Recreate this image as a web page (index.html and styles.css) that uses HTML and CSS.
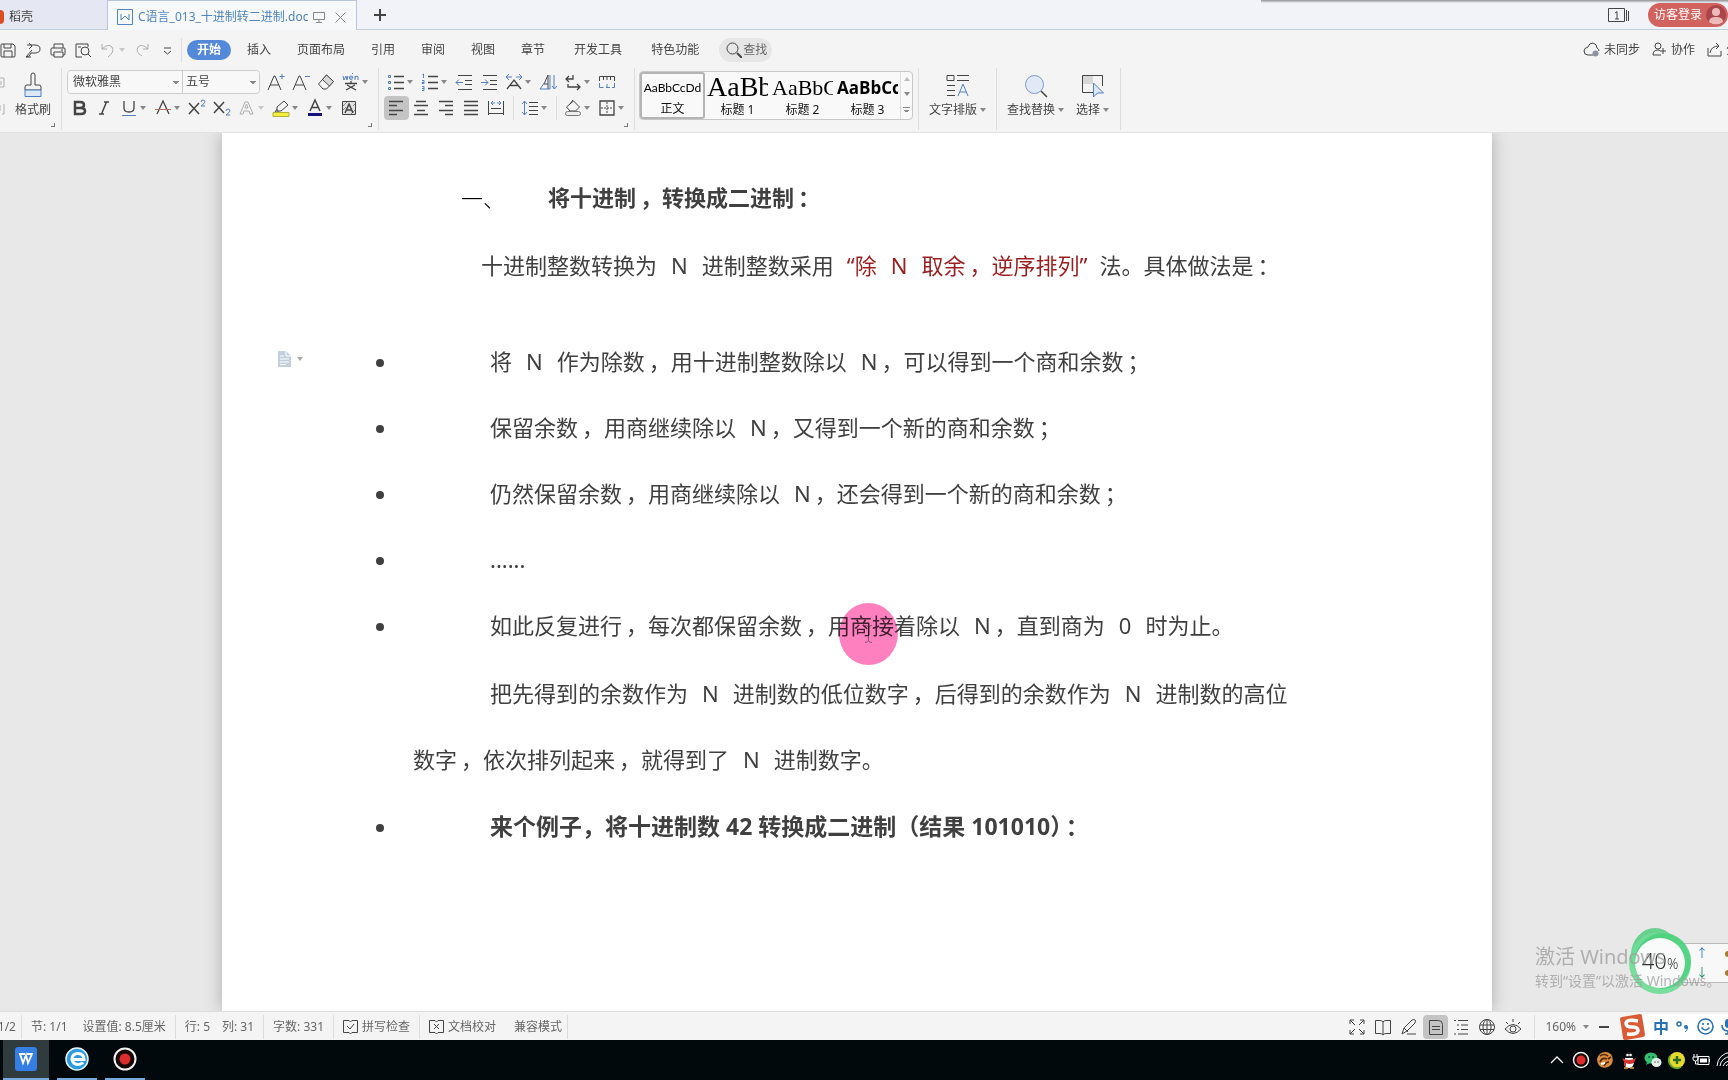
FILE: index.html
```html
<!DOCTYPE html>
<html lang="zh-CN">
<head>
<meta charset="utf-8">
<title>C语言_013_十进制转二进制.doc</title>
<link rel="stylesheet" href="styles.css">
</head>
<body>
<header>
  <nav class="tabs">
    <button class="tab home"><i class="flame"></i>稻壳</button>
    <button class="tab active">
      <svg width="16" height="16" viewBox="0 0 16 16" class="blue"><path d="M.5.5h15v15H.5zM4 5v6l4-4 4 4V5"/></svg>
      <span>C语言_013_十进制转二进制.doc</span>
      <svg width="12" height="12" viewBox="0 0 12 12" class="grey"><path d="M.5 1.500h11v7H.5zM6 8v3M3 11.500h6"/></svg>
      <svg width="11" height="11" viewBox="0 0 11 11" class="grey shut"><path d="M.5.5l10 10M10.500.5l-10 10"/></svg>
    </button>
    <button class="plus" aria-label="新建"><svg width="12" height="12" viewBox="0 0 12 12"><path d="M6 0v12M0 6h12" stroke-width="2"/></svg></button>
    <div class="account">
      <svg width="22" height="16" viewBox="0 0 22 16"><path d="M.5 1.500h16v13H.5zM18.500 3v11M20.500 4v10"/><path d="M7 6l2-1.500V12M7 12h4"/></svg>
      <button class="login">访客登录<svg width="20" height="20" viewBox="0 0 20 20"><circle cx="10" cy="10" r="10" fill="#a9464c" stroke="none"/><circle cx="10" cy="7" r="4" fill="#eebbb9" stroke="none"/><path d="M3 17q0-5 7-5t7 5q-7 5-14 0" fill="#eebbb9" stroke="none"/></svg></button>
    </div>
  </nav>

  <nav class="menu">
    <div class="quick">
      <button class="ic" aria-label="保存"><svg viewBox="0 0 20 20"><path d="M4 4h11l2 2v10q0 1-1 1H4q-1 0-1-1V5q0-1 1-1zM6 4v4h7V4M6 17v-6h8v6"/></svg></button>
      <button class="ic" aria-label="输出"><svg viewBox="0 0 20 20"><path d="M4 5h8q5 0 5 4t-5 4H8M6 3l3 3-3 3M9 10l-6 7M8 13q-1 4-5 4h5"/></svg></button>
      <button class="ic" aria-label="打印"><svg viewBox="0 0 20 20"><path d="M6 8V4h9v4M6 15H4q-1 0-1-1V9q0-1 1-1h12q1 0 1 1v5q0 1-1 1h-1M6 12h9v5H6zM13 10h2"/></svg></button>
      <button class="ic" aria-label="预览"><svg viewBox="0 0 20 20"><path d="M9 17H3V4h12v3M5 7h3"/><circle cx="12" cy="11" r="4"/><path d="M15 14l3 3"/></svg></button>
      <button class="ic c pale" aria-label="撤销"><svg viewBox="0 0 20 20"><path d="M4 4v5h5M4 9q6-6 10-2 3 5-4 10"/></svg></button>
      <button class="ic pale" aria-label="恢复"><svg viewBox="0 0 20 20"><path d="M16 4v5h-5M16 9q-6-6-10-2-3 5 4 9"/></svg></button>
      <button class="ic" aria-label="更多"><svg viewBox="0 0 20 20"><path d="M7 8h7M7 11l3.500 3 3.500-3"/></svg></button>
    </div>
    <button class="m on">开始</button><button class="m">插入</button><button class="m">页面布局</button><button class="m">引用</button><button class="m">审阅</button><button class="m">视图</button><button class="m">章节</button><button class="m wide">开发工具</button><button class="m">特色功能</button>
    <button class="find"><svg width="16" height="16" viewBox="0 0 16 16"><circle cx="6.500" cy="6.500" r="5.500"/><path d="M11 11l5 5" stroke-width="2"/></svg>查找</button>
    <div class="share">
      <button><svg width="17" height="15" viewBox="0 0 17 15"><path d="M10 13H5q-4 0-4-4 0-3 4-4 1-4 5-4 4 1 4 5 2 1 2 3"/><circle cx="12.500" cy="11.500" r="3" fill="#8b93a5" stroke="none"/></svg>未同步</button>
      <button><svg width="15" height="15" viewBox="0 0 15 15"><circle cx="6" cy="4" r="3"/><path d="M9 13H1q0-5 5-5l2 .5M11 6v6M8 9h6"/></svg>协作</button>
      <button><svg width="15" height="15" viewBox="0 0 15 15"><path d="M1 6v8h13V9M3 11q1-7 9-7M9 1l3 3-3 3"/></svg>分</button>
    </div>
  </nav>

  <div class="ribbon">
    <section class="group clip">
      <div class="cut"><svg width="5" height="12" viewBox="0 0 5 12"><path d="M0 1h4v9H0M1 4v4"/></svg><svg width="5" height="12" viewBox="0 0 5 12"><path d="M4 1v10H2M0 2v6"/></svg></div>
      <button class="big brush"><svg width="20" height="26" viewBox="0 0 20 26"><path d="M8 13V3q0-2 2-2t2 2v10h4q2 0 2 2v3H2v-3q0-2 2-2z"/><path d="M2 18h16v6.500H2z" fill="#dbe8f8" stroke="#4d80bf"/></svg>格式刷</button>
      <i class="corner"></i>
    </section>

    <section class="group font">
      <div class="row">
        <div class="combo"><select aria-label="字体" class="face"><option>微软雅黑</option></select><select aria-label="字号" class="size"><option>五号</option></select></div>
        <button class="ic" aria-label="增大字号"><svg viewBox="0 0 20 20"><path d="M2 18L8 4h1l6 14M4 13h9"/><path class="b" d="M16 2v5M13.500 4.500h5"/></svg></button>
        <button class="ic" aria-label="减小字号"><svg viewBox="0 0 20 20"><path d="M2 18L8 4h1l6 14M4 13h9"/><path class="b" d="M14 4.500h5"/></svg></button>
        <button class="ic" aria-label="清除格式"><svg viewBox="0 0 20 20"><path d="M2.500 12l8-9 7 6.500-7 7.500H7z"/><path d="M6.500 7.500l7 6.500 4-4.500-7-6.500z" fill="#d9d9d9"/></svg></button>
        <button class="ic c" aria-label="拼音"><svg viewBox="0 0 20 20"><path class="b" d="M2 4l1 4 2-4 1 4 1-4M9 6h3q0-2-2-2t-1.500 2q0 2 3 2M11 2l1-1M14 8V4M14 5q3-2 3 0v3"/><path d="M4 11.500h12M10 9v2M6 13l9 5M14 13l-9 5" stroke-width="1.300"/></svg></button>
      </div>
      <div class="row">
        <button class="ic" aria-label="加粗"><svg viewBox="0 0 20 20"><path d="M6 4h5q4 0 4 3t-4 3H6zM6 10h6q4 0 4 3t-4 3H6z" stroke-width="2.500"/></svg></button>
        <button class="ic" aria-label="倾斜"><svg viewBox="0 0 20 20"><path d="M10 4h5M5 16h5M12.500 4l-5 12" stroke-width="1.500"/></svg></button>
        <button class="ic c" aria-label="下划线"><svg viewBox="0 0 20 20"><path d="M5 3v7q0 4 5 4t5-4V3" stroke-width="1.300"/><path class="b" d="M3 17.500h14"/></svg></button>
        <button class="ic c" aria-label="删除线"><svg viewBox="0 0 20 20"><path d="M4 16l6-13 6 13" stroke-width="1.300"/><path d="M2 11.500h16" stroke="#b0705f"/></svg></button>
        <button class="ic" aria-label="上标"><svg viewBox="0 0 20 20"><path d="M2 5l10 11M12 5L2 16" stroke-width="1.500"/><path class="b" d="M14 4q0-2 2-2t2 2q0 1-4 4h4"/></svg></button>
        <button class="ic" aria-label="下标"><svg viewBox="0 0 20 20"><path d="M2 4l10 11M12 4L2 15" stroke-width="1.500"/><path class="b" d="M14 13q0-2 2-2t2 2q0 1-4 4h4"/></svg></button>
        <button class="ic c pale" aria-label="文字效果"><svg viewBox="0 0 20 20"><path d="M3 16L8 4h3l5 12h-3l-1-3H7l-1 3zM8 10h3L9.500 6z"/></svg></button>
        <button class="ic c" aria-label="突出显示"><svg viewBox="0 0 20 20"><path d="M6 9l7-6 4 4-7 6H6zM6 11l-2 3h4"/><path d="M2 14.500h16v4H2z" fill="#f5ee3c" stroke="#b5af40"/></svg></button>
        <button class="ic c" aria-label="字体颜色"><svg viewBox="0 0 20 20"><path d="M5 13l5-11 5 11M6.500 9.500h7" stroke-width="1.500"/><path d="M3 15h14v3H3z" fill="#15137c" stroke="none"/></svg></button>
        <button class="ic" aria-label="字符底纹"><svg viewBox="0 0 20 20"><path d="M3.500 3.500h13v13h-13z" fill="#e1e1e1"/><path d="M4 8l4-4M12 16l4-4M4 12l3-3M14 8l2-2" stroke="#888"/><path d="M6 15l4-9 4 9M7 12h6" stroke-width="1.500"/></svg></button>
      </div>
      <i class="corner"></i>
    </section>

    <section class="group para">
      <div class="row">
        <button class="ic c" aria-label="项目符号"><svg viewBox="0 0 20 20"><path d="M8 4.500h10M8 10.500h10M8 16.500h10" stroke-width="1.300"/><path class="b" d="M2.500 3.500h2v2h-2zM2.500 9.500h2v2h-2zM2.500 15.500h2v2h-2z"/></svg></button>
        <button class="ic c" aria-label="编号"><svg viewBox="0 0 20 20"><path d="M8 4.500h10M8 10.500h10M8 16.500h10" stroke-width="1.300"/><path class="b" d="M2.500 2.500l1-.5v4M2 8.500h2v2H2v1h2.500M2 14.500h2v4H2M2 16.500h2"/></svg></button>
        <button class="ic" aria-label="减少缩进"><svg viewBox="0 0 20 20"><path d="M4 3.500h14M11 8.500h7M11 12.500h7M4 17.500h14"/><path class="b" d="M2 10.500h7M5 7.500l-3 3 3 3"/></svg></button>
        <button class="ic" aria-label="增加缩进"><svg viewBox="0 0 20 20"><path d="M4 3.500h14M11 8.500h7M11 12.500h7M4 17.500h14"/><path class="b" d="M2 10.500h7M6 7.500l3 3-3 3"/></svg></button>
        <button class="ic c" aria-label="中文版式"><svg viewBox="0 0 20 20"><path d="M3 17l7-9 7 9M6 13.500h8" stroke-width="1.300"/><path class="b" d="M2 5h6M12 5h6M5 2L2 5l3 3M15 2l3 3-3 3"/></svg></button>
        <button class="ic" aria-label="排序"><svg viewBox="0 0 20 20"><path d="M10 3v14M10 3L6 12h4"/><path class="b" d="M2 17l5-7M2 17h10V3M16 3v14M14 14l2.500 3 2.500-3"/></svg></button>
        <button class="ic c" aria-label="换行"><svg viewBox="0 0 20 20"><path d="M10 3v4H3M6 4L3 7l3 3M5 12v3h12M14 12l3 3-3 3" stroke-width="1.300"/></svg></button>
        <button class="ic" aria-label="制表位"><svg viewBox="0 0 20 20"><path d="M2.500 9V4.500h15V9M6.500 5v3M10 5v3M13.500 5v3"/><path class="b" d="M2.500 11v4.500h4M9 15.500h4M17.500 11v4.500H15M10 12v3"/></svg></button>
      </div>
      <div class="row">
        <button class="ic sel" aria-label="左对齐"><svg viewBox="0 0 20 20"><path d="M3 3.500h14M3 7.500h8M3 12.500h14M3 16.500h8" stroke-width="1.300"/></svg></button>
        <button class="ic" aria-label="居中"><svg viewBox="0 0 20 20"><path d="M5 3.500h10M3 7.500h14M6 12.500h8M3 16.500h14" stroke-width="1.300"/></svg></button>
        <button class="ic" aria-label="右对齐"><svg viewBox="0 0 20 20"><path d="M3 3.500h14M9 7.500h8M3 12.500h14M9 16.500h8" stroke-width="1.300"/></svg></button>
        <button class="ic" aria-label="两端对齐"><svg viewBox="0 0 20 20"><path d="M3 3.500h14M3 7.500h14M3 12.500h14M3 16.500h14" stroke-width="1.300"/></svg></button>
        <button class="ic" aria-label="分散对齐"><svg viewBox="0 0 20 20"><path d="M2.500 3v14M17.500 3v14M5 10.500h10M3 15.500h14"/><path class="b" d="M5 5h4M11 5h4M7 3L5 5l2 2M13 3l2 2-2 2"/></svg></button>
        <i class="bar"></i>
        <button class="ic c" aria-label="行距"><svg viewBox="0 0 20 20"><path d="M9 4.500h9M9 8.500h9M9 12.500h9M9 16.500h9"/><path class="b" d="M4.500 3v14M2 6l2.500-3L7 6M2 14l2.500 3L7 14"/></svg></button>
        <i class="bar"></i>
        <button class="ic c" aria-label="底纹颜色"><svg viewBox="0 0 20 20"><path d="M3.500 9l7-6 6 6-4 4H7zM7 6l3-4"/><rect x="2.500" y="13.500" width="15" height="4" rx="2" fill="#eee" stroke="#777"/></svg></button>
        <button class="ic c" aria-label="边框"><svg viewBox="0 0 20 20"><path d="M3 3h14v14H3z" stroke-width="1.300"/><path d="M10 4v12M4 10h12" stroke-dasharray="2 1"/></svg></button>
      </div>
      <i class="corner"></i>
    </section>

    <section class="group styles">
      <div class="gallery">
        <button class="st cur"><b class="s0">AaBbCcDd</b>正文</button>
        <button class="st"><b class="s1">AaBb</b>标题 1</button>
        <button class="st"><b class="s2">AaBbC</b>标题 2</button>
        <button class="st"><b class="s3">AaBbCc</b>标题 3</button>
        <div class="scroll"><i class="up"></i><i></i><i class="more"></i></div>
      </div>
    </section>

    <section class="group">
      <button class="big"><svg width="24" height="24" viewBox="0 0 24 24"><path d="M1 1.500h7v5H1zM11 1.500h12M11 6.500h12M1 11.500h8M1 16.500h8M1 21.500h8"/><path class="b" d="M12 22l5-12 5 12M14 18h6"/></svg><span class="dd">文字排版</span></button>
    </section>
    <section class="group pair">
      <button class="big"><svg width="24" height="24" viewBox="0 0 24 24"><path d="M17 17l6 6" stroke-width="1.500"/><circle cx="10.500" cy="10.500" r="9" fill="#e1e8f6" stroke="#7d9bcd"/></svg><span class="dd">查找替换</span></button>
      <button class="big"><svg width="24" height="24" viewBox="0 0 24 24"><path d="M1 2h11v8H1z" fill="#d8d8d8" stroke="none"/><path d="M12 18.500H1.500v-17h20V12"/><path class="b" d="M12.500 9v14l4-4h6z" fill="#dbe8f8"/></svg><span class="dd">选择</span></button>
    </section>
  </div>
</header>

<main>
  <article>
    <h1><span class="no">一、</span><span>将十进制<span class="k">，</span>转换成二进制<span class="k">：</span></span></h1>
    <p class="lead">十进制整数转换为<span class="n">N</span>进制整数采用<span class="red"><span class="q">“</span>除<span class="n">N</span>取余<span class="k">，</span>逆序排列<span class="q end">”</span></span>法。具体做法是<span class="k">：</span></p>
    <ul>
      <li><span>将<span class="n">N</span>作为除数<span class="k">，</span>用十进制整数除以<span class="n l">N</span><span class="k">，</span>可以得到一个商和余数<span class="k">；</span></span></li>
      <li><span>保留余数<span class="k">，</span>用商继续除以<span class="n l">N</span><span class="k">，</span>又得到一个新的商和余数<span class="k">；</span></span></li>
      <li><span>仍然保留余数<span class="k">，</span>用商继续除以<span class="n l">N</span><span class="k">，</span>还会得到一个新的商和余数<span class="k">；</span></span></li>
      <li><span>......</span></li>
      <li><span>如此反复进行<span class="k">，</span>每次都保留余数<span class="k">，</span>用商接着除以<span class="n l">N</span><span class="k">，</span>直到商为<span class="n">0</span>时为止。</span></li>
    </ul>
    <p class="body">把先得到的余数作为<span class="n">N</span>进制数的低位数字<span class="k">，</span>后得到的余数作为<span class="n">N</span>进制数的高位<br>数字<span class="k">，</span>依次排列起来<span class="k">，</span>就得到了<span class="n">N</span>进制数字。</p>
    <ul class="example">
      <li><strong>来个例子，将十进制数 42 转换成二进制（结果 101010）<span class="k">：</span></strong></li>
    </ul>
    <button class="paste" aria-label="段落选项"><svg width="13" height="16" viewBox="0 0 13 16"><path d="M0 0h8l5 5v11H0z" fill="#c3cfdd" stroke="none"/><path d="M8 0v5h5M2 5h4M2 8h9M2 11h9M2 13.500h6" stroke="#fff"/></svg></button>
    <div class="pointer"><svg width="9" height="18" viewBox="0 0 9 18"><path d="M1 .5q3 0 3.500 2Q5 .5 8 .5M4.500 2v14M1 17.500q3 0 3.500-2 .5 2 3.500 2" stroke="#8b4f70"/></svg></div>
  </article>
  <div class="net"><span class="ua">↑</span><i class="o"></i><span class="da">↓</span><i class="o"></i></div>
  <div class="ball"><svg width="66" height="70" viewBox="0 0 66 70"><g stroke="none"><ellipse cx="28" cy="28" rx="24" ry="27" fill="#52cb80" opacity=".85"/><ellipse cx="33" cy="36" rx="31" ry="31" fill="#6ddc96" opacity=".9"/><ellipse cx="36" cy="34" rx="28" ry="28" fill="#45cf77" opacity=".7"/><circle cx="33" cy="36" r="25" fill="#f8fbf9"/></g></svg><span>40<small>%</small></span></div>
  <div class="mark"><strong>激活 Windows</strong><span>转到“设置”以激活 Windows。</span></div>
</main>

<footer>
  <div class="status">
    <span class="f pg">1/2</span><span class="f">节: 1/1<span class="nx">设置值: 8.5厘米</span></span><span class="f">行: 5<span class="ln">列: 31</span></span><span class="f">字数: 331</span>
    <button class="f"><svg width="15" height="16" viewBox="0 0 15 16"><path d="M6 1.500H.5v12H6l1.500 1.500L9 13.500h5.500v-12H9L7.500 3zM4 7l3 3 4-5"/></svg>拼写检查</button>
    <button class="f open"><svg width="15" height="16" viewBox="0 0 15 16"><path d="M6 1.500H.5v12H6l1.500 1.500L9 13.500h5.500v-12H9L7.500 3zM5 5l5 5M10 5l-5 5"/></svg>文档校对</button><span class="f compat">兼容模式</span>
    <div class="views">
      <button class="ic" aria-label="全屏"><svg viewBox="0 0 20 20"><path d="M3 7V3h4M3 3l5 5M13 3h4v4M17 3l-5 5M3 13v4h4M3 17l5-5M17 13v4h-4M17 17l-5-5"/></svg></button>
      <button class="ic" aria-label="阅读"><svg viewBox="0 0 20 20"><path d="M10 5Q9 3.500 7 3.500H2.500v13H7q2 0 3 1.500 1-1.500 3-1.500h4.500v-13H13q-2 0-3 1.500zv13"/></svg></button>
      <button class="ic" aria-label="写作"><svg viewBox="0 0 20 20"><path d="M3 17l2-6 8-8q2-1 3 0t0 3l-8 8zM5 11l4 4M8 17h9"/></svg></button>
      <button class="ic sel" aria-label="页面"><svg viewBox="0 0 20 20"><path d="M4.500 3.500h9q4 0 4 4v10h-13zM7 9.500h8M7 12.500h8"/></svg></button>
      <button class="ic" aria-label="大纲"><svg viewBox="0 0 20 20"><path d="M3 3.500h2M7 3.500h10M6 8h2M10 8h7M6 12.500h2M10 12.500h7M3 17h2M7 17h10"/></svg></button>
      <button class="ic" aria-label="网页"><svg viewBox="0 0 20 20"><circle cx="10" cy="10" r="7.500"/><ellipse cx="10" cy="10" rx="4" ry="7.500"/><path d="M10 2v16M3 8h14M3 12.500h14"/></svg></button>
      <button class="ic" aria-label="护眼"><svg viewBox="0 0 20 20"><path d="M2 12q8-9 16 0-8 9-16 0zM3 5l2 2M10 2v3M17 5l-2 2"/><circle cx="10" cy="12" r="3"/></svg></button>
    </div>
    <button class="zoom">160%</button>
    <button class="minus" aria-label="缩小"><svg width="10" height="2" viewBox="0 0 10 2"><path d="M0 1h10" stroke-width="2"/></svg></button>
    <div class="ime">
      <svg width="28" height="28" viewBox="0 0 28 28"><path d="M2 6q0-2 2-2l18-3q2 0 2 2l3 18q0 3-2 3L8 27q-3 0-3-2z" fill="#d95b36" stroke="none"/><path d="M20 8q-11-2-12 2-.5 4 6 4t6 4q-1 4-11 3" stroke="#fff" stroke-width="3.500"/></svg>
      <b>中</b>
      <svg width="14" height="14" viewBox="0 0 14 14"><circle cx="3" cy="4" r="2" stroke="#2872b5" stroke-width="1.500"/><circle cx="10" cy="7" r="2" fill="#2872b5" stroke="none"/><path d="M11.500 7q0 4-2.500 5" stroke="#2872b5"/></svg>
      <svg width="17" height="17" viewBox="0 0 17 17"><g stroke="#2872b5" stroke-width="1.600"><circle cx="8.500" cy="8.500" r="7.500"/><path d="M4.500 9.500q4 5 8 0M6 5v2M11 5v2"/></g></svg>
      <svg width="14" height="17" viewBox="0 0 14 17"><rect x="4" y="1" width="6" height="9" rx="3" fill="#2872b5" stroke="none"/><path d="M1 7q0 6 6 6t6-6M7 13v3M4 16h6" stroke="#2872b5" stroke-width="1.600"/></svg>
    </div>
  </div>
  <div class="taskbar">
    <button class="app now" aria-label="WPS"><svg width="22" height="24" viewBox="0 0 22 24"><rect width="22" height="24" rx="3" fill="#357ee3" stroke="none"/><path d="M4 7h6M5 7l3 9 3-8 2 8 4-9h-5" stroke="#fff" stroke-width="1.800"/></svg></button>
    <button class="app" aria-label="浏览器"><svg width="24" height="24" viewBox="0 0 24 24"><circle cx="12" cy="12" r="11" fill="#2a9be0" stroke="#e5f5fc" stroke-width="1.500"/><path d="M8 12.500h11q0-6-6-6t-6 6q1 5 6 5 3 0 5-2" stroke="#fff" stroke-width="3"/></svg></button>
    <button class="app" aria-label="录屏"><svg width="24" height="24" viewBox="0 0 24 24"><circle cx="12" cy="12" r="10.500" fill="#160606" stroke="#f2f2f2" stroke-width="2"/><circle cx="12" cy="12" r="5.500" fill="#dc2c2c" stroke="none"/></svg></button>
    <div class="tray">
      <svg viewBox="0 0 20 20"><path d="M4 13l6-6 6 6" stroke="#fff" stroke-width="1.300"/></svg>
      <svg viewBox="0 0 20 20"><circle cx="10" cy="10" r="7.500" fill="#160606" stroke="#eee" stroke-width="1.500"/><circle cx="10" cy="10" r="4.500" fill="#dc2c2c" stroke="none"/></svg>
      <svg viewBox="0 0 20 20"><path d="M10 2q5 0 7 4 2 5-1 9-4 4-10 2-4-3-4-8 2-7 8-7z" fill="#d98a3b" stroke="none"/><path d="M5 6q4-3 8 0M12 9q-5-2-7 3M14 12q-3 0-5 4M16 7l-3 2" stroke="#522611" stroke-width="1.600"/><path d="M6 14l4-1" stroke="#fff" stroke-width="2"/></svg>
      <svg viewBox="0 0 20 20"><ellipse cx="10" cy="12" rx="5" ry="6" fill="#fff" stroke="none"/><path d="M6 8q0-6 4-6t4 6z" fill="#181818" stroke="none"/><circle cx="8.500" cy="5" r="1.300" fill="#fff" stroke="none"/><circle cx="11.500" cy="5" r="1.300" fill="#fff" stroke="none"/><path d="M3 8q7 4 14 0l-2 5q-5 2-8 0v3H5v-4z" fill="#d23333" stroke="none"/><path d="M5 18h4M11 18h4" stroke="#f3a63d" stroke-width="1.500"/></svg>
      <svg viewBox="0 0 20 20"><g stroke="none"><ellipse cx="8" cy="8" rx="6.500" ry="5.500" fill="#35bd70"/><path d="M4 12l-1 3 4-2z" fill="#35bd70"/><ellipse cx="13.500" cy="12.500" rx="5" ry="4.500" fill="#e6f1e9"/><circle cx="6" cy="7" r="1" fill="#145b35"/><circle cx="10" cy="7" r="1" fill="#145b35"/><circle cx="12" cy="12" r=".8" fill="#555"/><circle cx="15" cy="12" r=".8" fill="#555"/></g></svg>
      <svg viewBox="0 0 20 20"><circle cx="10" cy="10" r="8" fill="#e6d92e" stroke="none"/><path d="M3 6a8 8 0 0 0 11 11" stroke="#63a533" stroke-width="2"/><path d="M10 6v8M6 10h8" stroke="#2a6b22" stroke-width="2.400"/></svg>
      <svg viewBox="0 0 20 20"><path d="M7 6.500h11v8H7zM18.500 9v3M3 4v3M6 4v3M2 7h5v2q0 2-2.500 2T2 9zM4.500 11v3H7" stroke="#fff"/><path d="M9 8.500h7v4H9z" fill="#fff" stroke="none"/></svg>
      <svg viewBox="0 0 20 20"><path d="M2 16Q3 4 16 2M5 16q1-8 11-10M8 16q1-4 8-6M11 16q1-2 5-2" stroke="#fff"/></svg>
    </div>
  </div>
</footer>
</body>
</html>
```
FILE: styles.css
```css
* { box-sizing: border-box; }
body {
  margin: 0;
  height: 100vh;
  display: flex;
  flex-direction: column;
  overflow: hidden;
  background: #e8e8e8;
  color: #444;
  font: 12px/18px "Noto Sans", "Noto Sans CJK SC", sans-serif;
}
button, select {
  font: inherit;
  color: inherit;
  border: 0;
  padding: 0;
  background: none;
  white-space: nowrap;
}
svg { fill: none; stroke: #444; flex: none; display: block; }
svg .b { stroke: #5480c2; }
.blue { stroke: #4f86bd; }
.grey { stroke: #888; }
.pale { opacity: .4; }
i { flex: none; }

/* window tabs */
.tabs {
  position: relative;
  display: flex;
  height: 30px;
  background: #f1f3f8;
  box-shadow: inset 0 -1px #c3cedb;
}
.tabs::after {
  content: "";
  position: absolute;
  top: 0;
  right: 0;
  width: 27%;
  height: 3px;
  background: linear-gradient(#8f9094, #f1f3f800);
}
.tab { display: flex; align-items: center; padding-top: 3px; }
.home { width: 107px; background: #e5e7f2; box-shadow: inset 0 -1px #c3cedb; gap: 5px; }
.flame { width: 4px; height: 14px; background: #dd4e22; border-radius: 0 7px 7px 0; }
.active {
  width: 250px;
  padding-left: 9px;
  gap: 5px;
  background: #f7f8fa;
  border: 1px solid #b9c6dc;
  border-bottom: 0;
  color: #4f86bd;
}
.shut { margin-left: 5px; }
.plus { width: 46px; display: grid; place-items: center; }
.account { margin-left: auto; display: flex; align-items: center; gap: 18px; }
.login {
  display: flex;
  align-items: center;
  gap: 4px;
  height: 24px;
  padding: 0 2px 0 6px;
  border-radius: 12px;
  background: #d1625d;
  color: #fff;
}

/* menu */
.menu, .ribbon, .status { background: #f4f4f4; }
.menu { display: flex; height: 38px; padding-top: 1px; align-items: center; overflow: hidden; }
.quick { display: flex; margin: 0 5px 0 -4px; padding-right: 1px; border-right: 1px solid #ddd; }
.ic {
  position: relative;
  flex: none;
  width: 25px;
  height: 24px;
  display: flex;
  align-items: center;
  padding-left: 2px;
  border-radius: 4px;
}
.ic svg { width: 20px; height: 20px; }
.c { width: 34px; }
.c::after, .dd::after, .zoom::after {
  content: "";
  border: 3px solid transparent;
  border-top: 4px solid #888;
  border-bottom: 0;
  margin-left: 1px;
}
.sel { background: #c4c4c4; }
.m { padding: 0 13px; height: 20px; line-height: 20px; }
.wide { padding: 0 16px; }
.on { padding: 0 10px; margin-right: 3px; border-radius: 10px; background: #5489da; color: #fff; font-weight: 700; }
.find {
  display: flex;
  align-items: center;
  gap: 1px;
  height: 24px;
  margin-left: 7px;
  padding: 0 5px 0 7px;
  border-radius: 12px;
  background: #e6e6e7;
  color: #666;
}
.share { display: flex; gap: 12px; margin: 0 -10px 0 auto; }
.share button { display: flex; align-items: center; gap: 4px; }

/* ribbon */
.ribbon { display: flex; height: 65px; padding-bottom: 2px; border-bottom: 1px solid #e2e2e2; }
.group { position: relative; display: flex; border-right: 1px solid #ddd; }
.clip { width: 62px; padding-left: 0; gap: 10px; }
.cut { width: 5px; display: flex; flex-direction: column; gap: 14px; padding-top: 9px; opacity: .4; }
.corner {
  position: absolute;
  right: 6px;
  bottom: 3px;
  width: 4px;
  height: 4px;
  border: solid #777;
  border-width: 0 1px 1px 0;
}
.big { display: flex; flex-direction: column; align-items: center; gap: 4px; padding: 6px 10px 0; line-height: 16px; }
.brush { padding: 4px 0 0; }
.dd { display: flex; align-items: center; gap: 3px; }
.dd::after { margin-left: 0; }
.pair .big + .big { padding-left: 2px; padding-right: 11px; }
.font { width: 317px; flex-direction: column; padding: 2px 5px; gap: 2px; }
.para { width: 256px; flex-direction: column; padding: 2px 5px; gap: 2px; }
.row { display: flex; align-items: center; height: 24px; }
.combo { display: flex; width: 194px; height: 24px; margin-right: 4px; border: 1px solid #ccc; border-radius: 4px; background: #fff; }
.combo select {
  appearance: none;
  padding-left: 5px;
  background-color: #f8f8f8;
  background-image: linear-gradient(45deg, transparent 50%, #888 50%), linear-gradient(-45deg, transparent 50%, #888 50%);
  background-image: linear-gradient(to bottom left, #888 50%, transparent 50%), linear-gradient(to bottom right, #888 50%, transparent 50%);
  background-size: 3px 4px;
  background-position: calc(100% - 6px) 10px, calc(100% - 3px) 10px;
  background-repeat: no-repeat;
  border-radius: 4px;
}
.combo .face { width: 115px; border-right: 1px solid #ccc; border-radius: 4px 0 0 4px; }
.combo .size { flex: 1; padding-left: 3px; }
.bar { width: 1px; height: 24px; margin: 0 4px; background: #ddd; }
.styles { width: 284px; padding: 3px 5px 3px 4px; }
.gallery { display: flex; width: 274px; height: 49px; border: 1px solid #c8c8c8; border-radius: 4px; background: #f9f9f9; }
.st {
  width: 65px;
  flex: none;
  overflow: hidden;
  display: flex;
  flex-direction: column;
  align-items: center;
  line-height: 16px;
  color: #111;
}
.st b { height: 30px; line-height: 32px; width: 61px; overflow: hidden; font-weight: 400; text-align: left; color: #000; }
.cur { border: 2px solid #b4b4b4; border-radius: 3px; }
.st.cur b { height: 28px; line-height: 28px; }
.st .s0 { font-size: 12px; font-family: Lato, sans-serif; text-align: center; }
.st .s1 { font: 28px/30px "Liberation Serif", serif; }
.st .s2 { font: 22px/32px "Liberation Serif", serif; }
.st .s3 { font-size: 17px; font-weight: 700; font-family: "Open Sans", sans-serif; }
.scroll { flex: 1; display: grid; place-items: center; border-left: 1px solid #ddd; }
.scroll i { border: 3px solid transparent; border-top: 4px solid #888; border-bottom: 0; }
.scroll .up { border-top: 0; border-bottom: 4px solid #bbb; }
.scroll .more { width: 7px; height: 7px; border: 0; border-top: 1px solid #888; background: linear-gradient(#888, #888) 50% 2px / 5px 1px no-repeat, linear-gradient(#888, #888) 50% 3px / 3px 1px no-repeat; }

/* document */
main {
  flex: 1;
  min-height: 0;
  position: relative;
  overflow: hidden;
  padding: 0 236px 0 222px;
}
article {
  position: relative;
  height: 100%;
  padding: 31px 0 0 191px;
  background: #fff;
  box-shadow: 0 0 16px #aaa;
  color: #404040;
  font-size: 22px;
  line-height: 66px;
  white-space: nowrap;
}
h1 { margin: 0 0 2px 48px; font-size: 22px; display: flex; gap: 43px; }
.no { font-family: "Noto Sans CJK SC", sans-serif; font-weight: 300; color: #000; }
p, ul { margin: 0; padding: 0; }
.lead { padding-left: 68px; }
.n { margin: 0 14px; }
.n.l { margin-right: 0; }
/* punctuation sits a little apart from the character before it */
.k { margin-left: 4px; }
.red { color: #9b1f1f; }
.q { margin-left: 13px; }
.q.end { margin: 0 12px 0 0; }
ul { list-style: none; margin: 30px 0 0 -37px; }
li { display: flex; align-items: center; }
li::before { content: ""; width: 8px; height: 8px; margin: 4px 106px 0 0; border-radius: 50%; background: #404040; }
.body { padding-top: 2px; }
.body::before { content: ""; display: inline-block; width: 77px; }
.example { margin-top: 1px; font-size: 23px; }
.paste { position: absolute; left: 56px; top: 218px; display: flex; align-items: center; gap: 6px; }
.paste::after { content: ""; border: 3px solid transparent; border-top: 4px solid #aaa; border-bottom: 0; }
.pointer {
  position: absolute;
  left: 617px;
  top: 470px;
  width: 59px;
  height: 62px;
  display: grid;
  place-items: center;
  border-radius: 50%;
  background: #ff80bf;
  mix-blend-mode: multiply;
}
.mark { position: absolute; right: 0; bottom: 18px; width: 193px; display: flex; flex-direction: column; color: #a0a0a0c8; font-size: 14px; line-height: 24px; white-space: nowrap; }
.mark strong { font-size: 20px; font-weight: 400; }
.net {
  position: absolute;
  right: 0;
  bottom: 28px;
  width: 66px;
  height: 40px;
  padding-left: 34px;
  display: grid;
  grid-template-columns: 29px 3px;
  align-items: center;
  line-height: 18px;
  overflow: hidden;
  background: #ffffffb0;
  border: solid #bbb;
  border-width: 1px 0;
}
.ua { color: #2878c8; }
.da { color: #198a60; }
.o { height: 6px; border-radius: 3px 0 0 3px; background: #a87a36; }
.ball { position: absolute; right: 35px; bottom: 14px; display: grid; place-items: center; }
.ball > * { grid-area: 1 / 1; }
.ball span { font-size: 22px; font-weight: 300; color: #333; }
.ball small { font-size: 14px; }

/* status bar */
footer { color: #666; }
.status { position: relative; display: flex; align-items: center; height: 29px; padding-top: 1px; border-top: 1px solid #ddd; }
.f { display: flex; align-items: center; gap: 4px; height: 24px; padding: 0 9px; border-right: 1px solid #ddd; white-space: nowrap; }
.pg { width: 22px; padding: 0 5px 0 0; justify-content: flex-end; }
.nx { margin-left: 11px; }
.ln { margin-left: 8px; }
.open { border-right: 0; }
.compat { padding-right: 5px; }
.views { display: flex; gap: 1px; margin-left: auto; padding-right: 8px; border-right: 1px solid #ddd; }
.zoom { display: flex; align-items: center; gap: 6px; padding-left: 10px; }
.minus { width: 30px; display: grid; place-items: center; }
.ime { display: flex; align-items: center; gap: 7px; width: 110px; height: 26px; margin-left: -1px; overflow: hidden; color: #2872b5; background: linear-gradient(90deg, #f4f4f4 24px, #fff 24px); }
.ime b { font-size: 16px; }

/* taskbar */
.taskbar { display: flex; align-items: stretch; height: 40px; padding-left: 3px; gap: 8px; background: #01090d; }
.app { width: 40px; display: grid; place-items: center; border-bottom: 2px solid #76a9dc; }
.now { width: 46px; background: #303b3e; }
.tray { display: flex; align-items: center; gap: 4px; margin: 0 -7px 0 auto; }
.tray svg { width: 20px; height: 20px; }
```
